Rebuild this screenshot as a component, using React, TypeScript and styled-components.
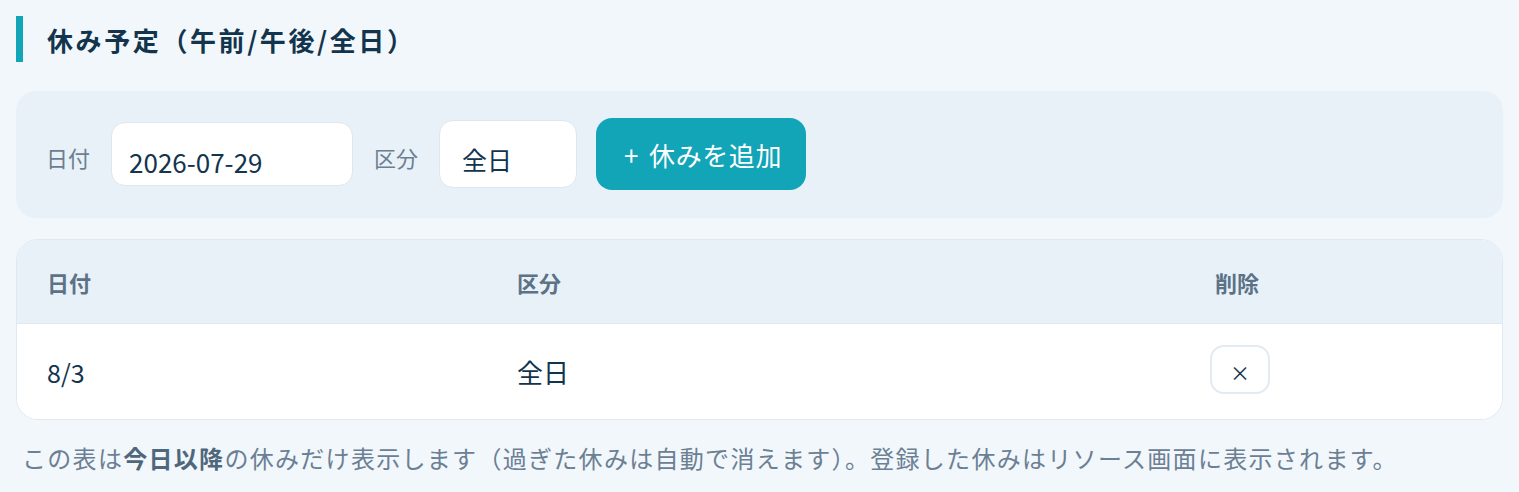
import styled, { createGlobalStyle } from "styled-components";

const GlobalStyle = createGlobalStyle`
  html, body {
    margin: 0;
    padding: 0;
    background: #f2f7fb;
  }
  body {
    font-family: "Noto Sans CJK JP", "Noto Sans", sans-serif;
    color: #12344d;
  }
`;

const Page = styled.div`
  padding: 16px 16px 0;
  display: flex;
  flex-direction: column;
`;

const Title = styled.h2`
  margin: 0;
  height: 46px;
  display: flex;
  align-items: center;
  border-left: 7px solid #12a5b8;
  padding-left: 24px;
  font-size: 26px;
  font-weight: 700;
  letter-spacing: 2.6px;
  color: #12344d;
`;

const FormPanel = styled.div`
  margin-top: 29px;
  background: #e9f1f8;
  border-radius: 20px;
  padding: 27px 30px 28px;
  display: flex;
  align-items: center;
  gap: 21px;
`;

const Label = styled.span`
  font-size: 22px;
  color: #6b7f92;
  margin-top: 6px;
`;

const DateInput = styled.input`
  box-sizing: border-box;
  width: 242px;
  height: 64px;
  padding: 14px 17px 0;
  border: 1px solid #dde7f0;
  border-radius: 14px;
  background: #fff;
  font-family: inherit;
  font-size: 26px;
  color: #12344d;
  outline: none;
`;

const Select = styled.select`
  box-sizing: border-box;
  appearance: none;
  width: 138px;
  height: 68px;
  padding: 10px 22px 0;
  border: 1px solid #dde7f0;
  border-radius: 14px;
  background: #fff;
  font-family: inherit;
  font-size: 25px;
  color: #12344d;
  outline: none;
`;

const AddButton = styled.button`
  box-sizing: border-box;
  height: 72px;
  padding: 0 24px 0 28px;
  margin-left: -2px;
  border: none;
  border-radius: 16px;
  background: #12a5b8;
  color: #fff;
  font-family: inherit;
  font-size: 26px;
  letter-spacing: 0.6px;
  display: flex;
  align-items: center;
  gap: 10px;
`;

const TableCard = styled.div`
  margin-top: 21px;
  border: 1px solid #e0e9f1;
  border-radius: 22px;
  overflow: hidden;
  background: #fff;
`;

const Row = styled.div<{ $head?: boolean }>`
  display: grid;
  grid-template-columns: 470px 698px 1fr;
  align-items: center;
  height: ${({ $head }) => ($head ? "83px" : "95px")};
  background: ${({ $head }) => ($head ? "#e9f1f8" : "#fff")};
  border-bottom: ${({ $head }) => ($head ? "1px solid #dde8f1" : "none")};
`;

const HeadCell = styled.div`
  padding-left: 30px;
  font-size: 22px;
  font-weight: 700;
  color: #5b7287;
`;

const Cell = styled.div<{ $size?: number }>`
  padding-left: 30px;
  font-size: ${({ $size }) => $size ?? 26}px;
  color: #12344d;
`;

const DeleteButton = styled.button`
  box-sizing: border-box;
  width: 60px;
  height: 49px;
  margin-left: -5px;
  margin-top: -4px;
  border: 2px solid #e2ebf3;
  border-radius: 14px;
  background: #fff;
  color: #12344d;
  font-family: inherit;
  font-size: 20px;
  padding-top: 6px;
`;

const Note = styled.p`
  margin: 0;
  padding: 20px 0 0 6px;
  font-size: 24px;
  letter-spacing: 1.3px;
  color: #6b8094;

  strong {
    color: #4f677c;
    font-weight: 700;
  }
`;

const holidays = [{ date: "8/3", kind: "全日" }];

export default function App() {
  return (
    <>
      <GlobalStyle />
      <Page>
        <Title>休み予定（午前/午後/全日）</Title>

        <FormPanel>
          <Label>日付</Label>
          <DateInput type="text" defaultValue="2026-07-29" />
          <Label>区分</Label>
          <Select defaultValue="全日">
            <option>午前</option>
            <option>午後</option>
            <option>全日</option>
          </Select>
          <AddButton>
            <span>+</span>
            <span>休みを追加</span>
          </AddButton>
        </FormPanel>

        <TableCard>
          <Row $head>
            <HeadCell>日付</HeadCell>
            <HeadCell>区分</HeadCell>
            <HeadCell>削除</HeadCell>
          </Row>
          {holidays.map((h, i) => (
            <Row key={i}>
              <Cell $size={25}>{h.date}</Cell>
              <Cell>{h.kind}</Cell>
              <Cell>
                <DeleteButton>×</DeleteButton>
              </Cell>
            </Row>
          ))}
        </TableCard>

        <Note>
          この表は<strong>今日以降</strong>
          の休みだけ表示します（過ぎた休みは自動で消えます）。登録した休みはリソース画面に表示されます。
        </Note>
      </Page>
    </>
  );
}
